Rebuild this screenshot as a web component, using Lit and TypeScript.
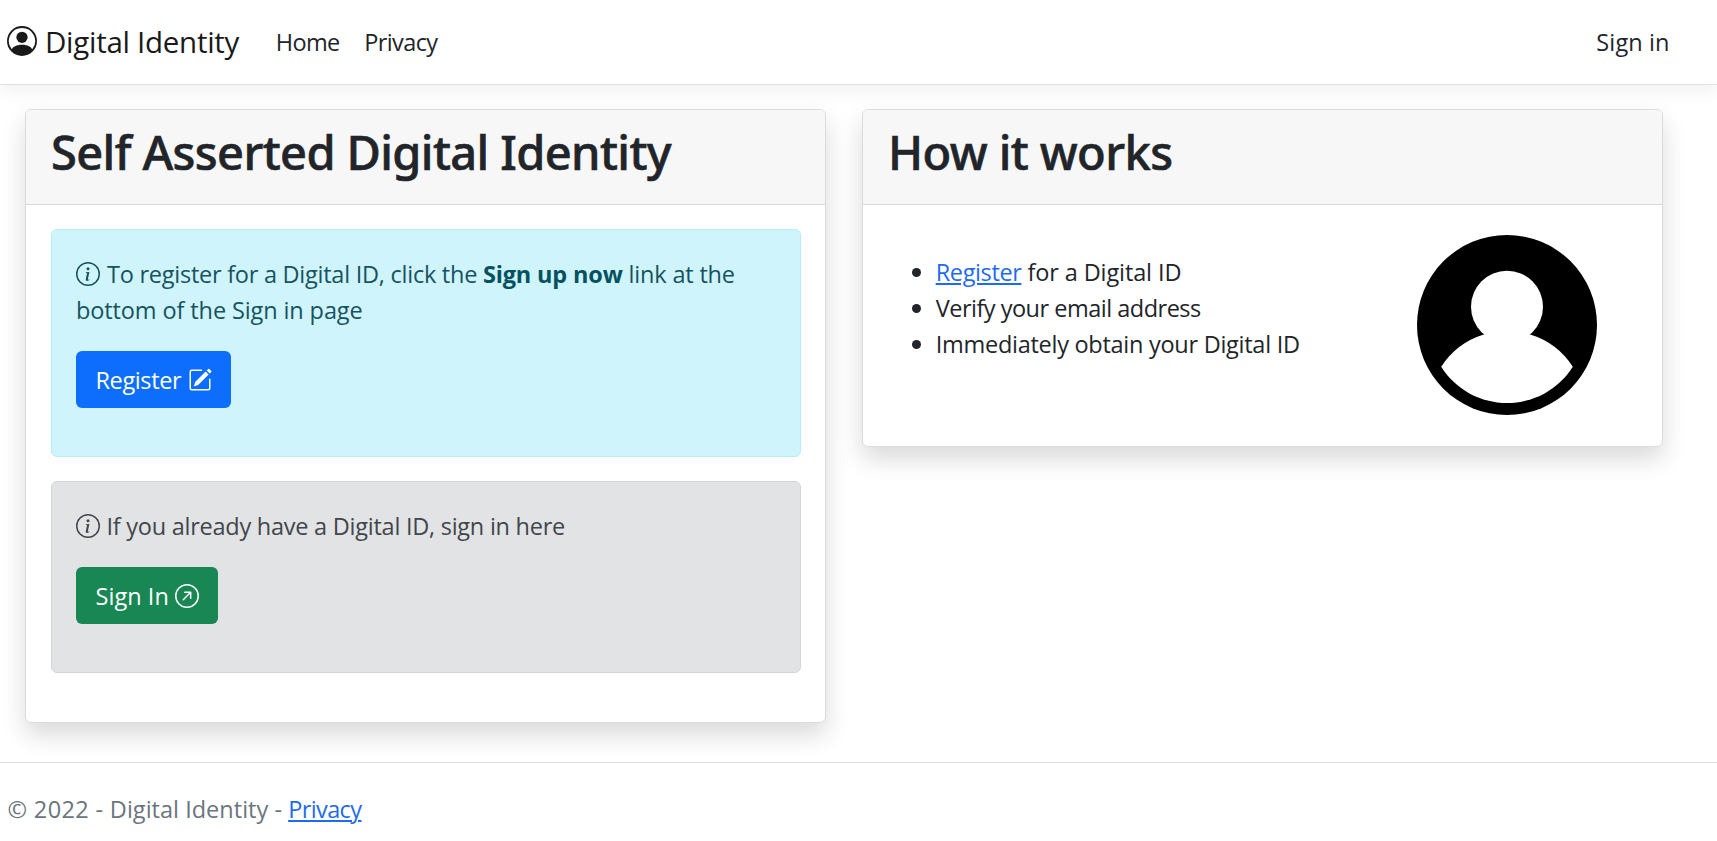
import { LitElement, html, css, svg } from 'lit';
import { customElement } from 'lit/decorators.js';

const icon = (body: unknown) =>
  html`<svg class="icon" viewBox="0 0 16 16" fill="currentColor" aria-hidden="true">${body}</svg>`;

const personCircle = svg`
  <path d="M11 6a3 3 0 1 1-6 0 3 3 0 0 1 6 0z"/>
  <path fill-rule="evenodd" d="M0 8a8 8 0 1 1 16 0A8 8 0 0 1 0 8zm8-7a7 7 0 0 0-5.468 11.37C3.242 11.226 4.805 10 8 10s4.757 1.225 5.468 2.37A7 7 0 0 0 8 1z"/>`;
const infoCircle = svg`
  <path d="M8 15A7 7 0 1 1 8 1a7 7 0 0 1 0 14zm0 1A8 8 0 1 0 8 0a8 8 0 0 0 0 16z"/>
  <path d="m8.93 6.588-2.29.287-.082.38.45.083c.294.07.352.176.288.469l-.738 3.468c-.194.897.105 1.319.808 1.319.545 0 1.178-.252 1.465-.598l.088-.416c-.2.176-.492.246-.686.246-.275 0-.375-.193-.304-.533L8.93 6.588zM9 4.5a1 1 0 1 1-2 0 1 1 0 0 1 2 0z"/>`;
const pencilSquare = svg`
  <path d="M15.502 1.94a.5.5 0 0 1 0 .706L14.459 3.69l-2-2L13.502.646a.5.5 0 0 1 .707 0l1.293 1.293zm-1.75 2.456-2-2L4.939 9.21a.5.5 0 0 0-.121.196l-.805 2.414a.25.25 0 0 0 .316.316l2.414-.805a.5.5 0 0 0 .196-.12l6.813-6.814z"/>
  <path fill-rule="evenodd" d="M1 13.5A1.5 1.5 0 0 0 2.5 15h11a1.5 1.5 0 0 0 1.5-1.5v-6a.5.5 0 0 0-1 0v6a.5.5 0 0 1-.5.5h-11a.5.5 0 0 1-.5-.5v-11a.5.5 0 0 1 .5-.5H9a.5.5 0 0 0 0-1H2.5A1.5 1.5 0 0 0 1 2.5v11z"/>`;
const arrowCircle = svg`
  <path fill-rule="evenodd" d="M1 8a7 7 0 1 0 14 0A7 7 0 0 0 1 8zm15 0A8 8 0 1 1 0 8a8 8 0 0 1 16 0zM5.854 10.803a.5.5 0 1 1-.708-.707L9.243 6H6.475a.5.5 0 1 1 0-1h3.975a.5.5 0 0 1 .5.5v3.975a.5.5 0 1 1-1 0V6.707l-4.096 4.096z"/>`;

@customElement('app-root')
export class AppRoot extends LitElement {
  static styles = css`
    :host {
      display: flex;
      flex-direction: column;
      height: 841px;
      overflow: hidden;
      box-sizing: border-box;
      background: #fff;
      color: #212529;
      font: 400 23.5px/36px 'Open Sans', 'Noto Sans', sans-serif;
    }
    * { box-sizing: border-box; }
    a { color: inherit; text-decoration: none; }
    .icon { flex: none; width: 24px; height: 24px; display: block; }

    .nav {
      display: flex;
      height: 85px;
      flex: none;
      padding-right: 47.5px;
      padding-left: 7px;
      border-bottom: 1px solid #dee2e6;
      box-shadow: 0 6px 18px rgba(0, 0, 0, 0.06);
    }
    .nav a { padding-top: 24px; white-space: nowrap; }
    .nav .brand {
      display: flex;
      width: 268.7px;
      padding-top: 19.5px;
      font-size: 29.5px;
      line-height: 44px;
      letter-spacing: -0.28px;
      color: #1a1a1a;
    }
    .brand .icon { width: 30px; height: 30px; margin: 6.5px 8px 0 0; }
    .nav .home { width: 88.5px; letter-spacing: -0.6px; }
    .nav .privacy { letter-spacing: -0.6px; }
    .nav .signin { margin-left: auto; letter-spacing: 0.1px; }

    .main {
      flex: none;
      display: grid;
      grid-template-columns: 801px 801px;
      column-gap: 36px;
      align-items: start;
      height: 677px;
      padding: 24px 0 0 25px;
    }
    .card {
      border: 1px solid #dcdcdc;
      border-radius: 6px;
      background: #fff;
      box-shadow: 0 12px 24px rgba(0, 0, 0, 0.15);
    }
    .card-head {
      height: 95px;
      padding: 13px 25px 0;
      border-bottom: 1px solid #d9d9d9;
      border-radius: 5px 5px 0 0;
      background: #f7f7f7;
    }
    h1 {
      margin: 0;
      font: 500 47px/58px 'Noto Sans', 'Open Sans', sans-serif;
      letter-spacing: -0.62px;
      -webkit-text-stroke: 0.6px #212529;
      white-space: nowrap;
    }
    .how h1 { letter-spacing: -0.6px; }
    .register-card { height: 614px; }
    .card-body { padding: 24px 24px 0 25px; }

    .alert {
      margin-bottom: 24px;
      padding: 26px 24px 0;
      border: 1px solid;
      border-radius: 6px;
    }
    .info { height: 228px; background: #cff4fc; border-color: #b9edf5; color: #16535f; }
    .second { height: 192px; background: #e2e3e5; border-color: #d3d6d8; color: #41464b; }
    .line { display: flex; height: 36px; white-space: pre; }
    .line .icon { margin: 6px 7px 0 0; }
    .second .line .icon { margin-right: 6.5px; }
    .line strong { font-weight: 700; letter-spacing: -0.16px; color: #055160; }
    .t1 { letter-spacing: -0.25px; }
    .t2 { letter-spacing: -0.18px; }
    .t3 { letter-spacing: -0.11px; }
    .t4 { letter-spacing: -0.25px; }

    .btn {
      display: flex;
      height: 57px;
      margin-top: 23px;
      padding: 11px 0 0 19.5px;
      border-radius: 6px;
      color: #fff;
      white-space: nowrap;
    }
    .info .btn { width: 155px; background: #0d6efd; letter-spacing: -0.38px; }
    .second .btn { width: 142px; background: #198754; letter-spacing: 0.05px; }
    .info .btn .icon { margin: 6px 0 0 7px; }
    .second .btn .icon { margin: 6px 0 0 5.8px; }

    .how { height: 338px; }
    .how-body { display: flex; justify-content: space-between; padding: 30px 65px 0 49px; }
    ul { list-style: none; margin: 0; padding: 19px 0 0; }
    li { display: flex; align-items: center; height: 36px; white-space: pre; }
    li::before {
      content: '';
      width: 9px;
      height: 9px;
      margin-right: 14.7px;
      border-radius: 50%;
      background: #212529;
    }
    a.link {
      color: #1f6bf0;
      text-decoration: underline;
      text-decoration-thickness: 2px;
      text-underline-offset: 2px;
    }
    .l1 { letter-spacing: -0.38px; }
    .l2 { letter-spacing: -0.11px; }
    .l3 { letter-spacing: -0.5px; }
    .l4 { letter-spacing: -0.27px; }
    .avatar { display: block; width: 180px; height: 180px; }

    .footer {
      display: flex;
      flex: none;
      height: 79px;
      padding: 28px 0 0 7.5px;
      border-top: 1px solid #dee2e6;
      color: #6c757d;
      white-space: pre;
    }
    .year { letter-spacing: 0.35px; }
    .owner { letter-spacing: 0.02px; }
    .footer .link { letter-spacing: -0.6px; }
  `;

  render() {
    return html`
      <header class="nav">
        <a class="brand" href="#">${icon(personCircle)}<span>Digital Identity</span></a>
        <a class="home" href="#">Home</a>
        <a class="privacy" href="#">Privacy</a>
        <a class="signin" href="#">Sign in</a>
      </header>
      <main class="main">
        <section class="card register-card">
          <div class="card-head"><h1>Self Asserted Digital Identity</h1></div>
          <div class="card-body">
            <div class="alert info">
              <div class="line">${icon(infoCircle)}<span class="t1">To register for a Digital ID, click the </span><strong>Sign up now</strong><span class="t2"> link at the</span></div>
              <div class="line"><span class="t3">bottom of the Sign in page</span></div>
              <a class="btn" href="#"><span>Register</span>${icon(pencilSquare)}</a>
            </div>
            <div class="alert second">
              <div class="line">${icon(infoCircle)}<span class="t4">If you already have a Digital ID, sign in here</span></div>
              <a class="btn" href="#"><span>Sign In</span>${icon(arrowCircle)}</a>
            </div>
          </div>
        </section>
        <section class="card how">
          <div class="card-head"><h1>How it works</h1></div>
          <div class="how-body">
            <ul>
              <li><a class="link l1" href="#">Register</a><span class="l2"> for a Digital ID</span></li>
              <li><span class="l3">Verify your email address</span></li>
              <li><span class="l4">Immediately obtain your Digital ID</span></li>
            </ul>
            <svg class="avatar" viewBox="0 0 180 180" aria-hidden="true">
              <circle cx="90" cy="90" r="90" fill="#000" />
              <circle cx="90" cy="71.7" r="36" fill="#fff" />
              <path fill="#fff" d="M24.2 131.7A78.4 78.4 0 0 1 66.7 99.5H113.3A78.4 78.4 0 0 1 155.8 131.7A77.7 77.7 0 0 1 24.2 131.7Z" />
            </svg>
          </div>
        </section>
      </main>
      <footer class="footer"><span class="year">© 2022 - </span><span class="owner">Digital Identity - </span><a class="link" href="#">Privacy</a></footer>
    `;
  }
}
